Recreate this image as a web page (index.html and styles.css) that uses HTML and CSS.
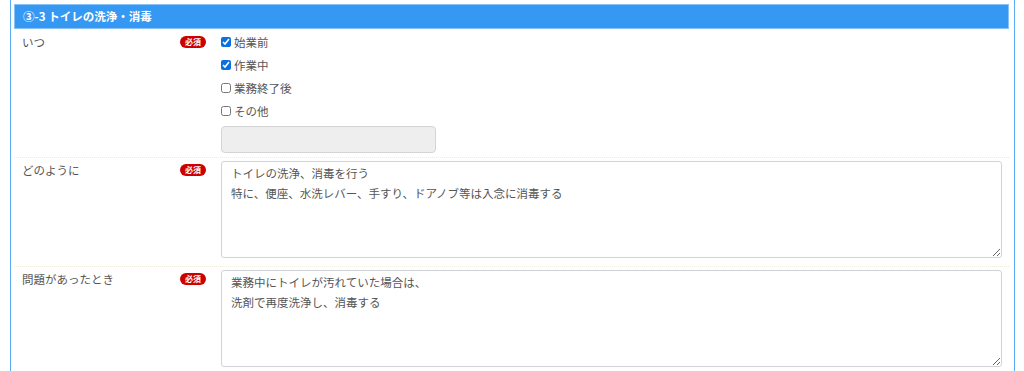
FILE: index.html
```html
<!DOCTYPE html>
<html lang="ja">
    <head>
        <meta charset="utf-8">
        <title>トイレの洗浄・消毒</title>
        <link rel="stylesheet" href="styles.css">
    </head>
    <body>
        <div class="section">
            <h3 class="section-title">③-3 トイレの洗浄・消毒</h3>
            <div class="row">
                <div class="label">
                    <span>いつ</span>
                    <span class="badge">必須</span>
                </div>
                <div class="field">
                    <label class="check"><input type="checkbox" checked> 始業前</label>
                    <label class="check"><input type="checkbox" checked> 作業中</label>
                    <label class="check"><input type="checkbox"> 業務終了後</label>
                    <label class="check"><input type="checkbox"> その他</label>
                    <input type="text" class="other" disabled>
                </div>
            </div>
            <div class="row">
                <div class="label">
                    <span>どのように</span>
                    <span class="badge">必須</span>
                </div>
                <div class="field">
                    <textarea rows="5">トイレの洗浄、消毒を行う
特に、便座、水洗レバー、手すり、ドアノブ等は入念に消毒する</textarea>
                </div>
            </div>
            <div class="row">
                <div class="label">
                    <span>問題があったとき</span>
                    <span class="badge">必須</span>
                </div>
                <div class="field">
                    <textarea rows="5">業務中にトイレが汚れていた場合は、
洗剤で再度洗浄し、消毒する</textarea>
                </div>
            </div>
        </div>
    </body>
</html>
```
FILE: styles.css
```css
* {
    margin: 0;
    padding: 0;
    box-sizing: border-box;
}
body {
    font-family: "Noto Sans CJK JP", "Noto Sans", sans-serif;
    font-size: 11.5px;
    color: #555;
    background: #fff;
}
.section {
    width: 1005px;
    height: 371px;
    margin-left: 10px;
    border-left: 1px solid #5aacf7;
    border-right: 1px solid #5aacf7;
    padding: 4px 5px 0 3px;
    overflow: hidden;
}
.section-title {
    height: 25px;
    line-height: 23px;
    padding-left: 8px;
    background-color: #3598f2;
    border: 1px solid #86c2f7;
    color: #fff;
    font-size: 11.5px;
    font-weight: 700;
}
.row {
    display: flex;
    padding: 3px 0 8px;
    border-bottom: 1px dotted #efeadb;
}
.row:first-of-type {
    padding: 4px 0;
}
.label {
    display: flex;
    justify-content: space-between;
    align-items: flex-start;
    width: 192px;
    padding-left: 8px;
    line-height: 18px;
}
.badge {
    display: inline-block;
    margin-top: 3px;
    width: 26px;
    height: 12px;
    line-height: 12px;
    border-radius: 6px;
    background-color: #cc0000;
    color: #fff;
    font-size: 8px;
    font-weight: 700;
    text-align: center;
}
.field {
    flex: 1;
    margin-left: 15px;
    margin-right: 7px;
}
.check {
    display: flex;
    align-items: center;
    height: 18px;
    margin-bottom: 5px;
}
.check input {
    width: 10px;
    height: 10px;
    margin: 0 3px 0 0;
    accent-color: #0b6fe0;
}
.other {
    display: block;
    width: 215px;
    height: 27px;
    margin-top: 6px;
    border: 1px solid #d4d4d4;
    border-radius: 4px;
    background-color: #eee;
}
textarea {
    display: block;
    width: 100%;
    height: 97px;
    padding: 2px 9px;
    border: 1px solid #d0d4d8;
    border-radius: 3px;
    font-family: "Noto Sans CJK JP", "Noto Sans", sans-serif;
    font-size: 11.5px;
    line-height: 19.5px;
    color: #555;
    outline: none;
}
```
